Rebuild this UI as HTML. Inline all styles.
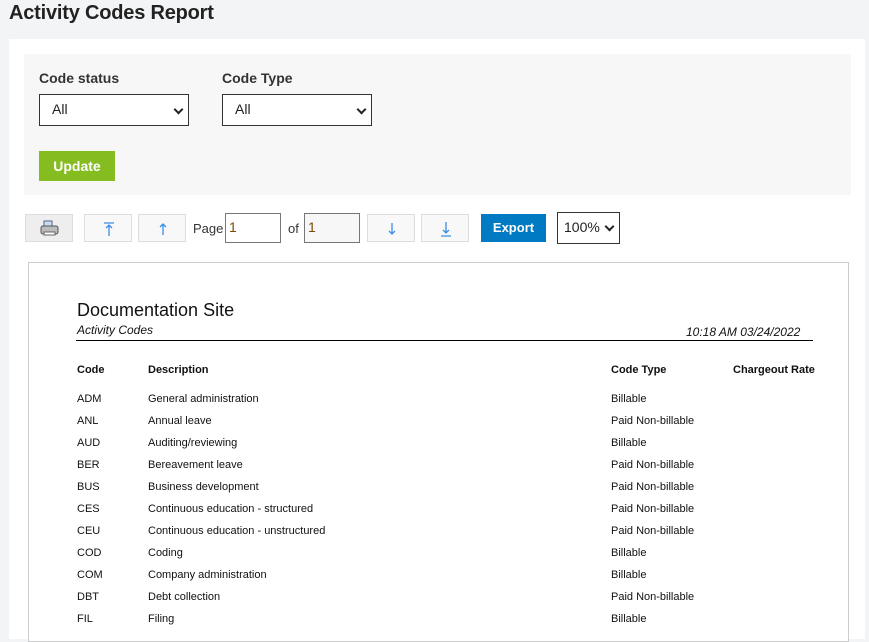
<!DOCTYPE html>
<html><head><meta charset="utf-8"><style>
*{box-sizing:border-box;margin:0;padding:0}
body{width:869px;height:622px;overflow:hidden;background:#f3f4f6;font-family:"Liberation Sans",Arial,sans-serif;position:relative;color:#222}
.abs{position:absolute}
h1{position:absolute;left:9px;top:2px;font-size:20px;font-weight:bold;color:#222;letter-spacing:-0.2px}
.panel{left:9px;top:39px;width:856px;height:600px;background:#fff}
.filt{left:24px;top:54px;width:827px;height:141px;background:#f7f7f8}
.lbl{font-size:14px;font-weight:bold;color:#333}
.sel{border:1px solid #333;background:#fff;height:32px;font-size:14px;padding:6px 12px;color:#222}
.chev{position:absolute;right:6px;top:11px;width:7px;height:7px;border-right:2px solid #222;border-bottom:2px solid #222;transform:rotate(45deg)}
.btn{border:1px solid #ddd;background:#f8f8f8;height:28px}
.inp{border:1px solid #777;height:30px;background:#fff;font-size:14px;padding:5px 3px;color:#7a4a00}
.rep{left:28px;top:262px;width:821px;height:380px;background:#fff;border:1px solid #ccc}
.t{position:absolute;font-size:11px;color:#111}
.b{font-weight:bold}
</style></head><body>
<h1>Activity Codes Report</h1>
<div class="abs panel"></div>
<div class="abs filt"></div>
<div class="abs lbl" style="left:39px;top:70px">Code status</div>
<div class="abs lbl" style="left:222px;top:70px">Code Type</div>
<div class="abs sel" style="left:39px;top:94px;width:150px">All<span class="chev"></span></div>
<div class="abs sel" style="left:222px;top:94px;width:150px">All<span class="chev"></span></div>
<div class="abs" style="left:39px;top:151px;width:76px;height:30px;background:#85bc20;color:#fff;font-size:14px;font-weight:bold;text-align:center;line-height:30px">Update</div>

<div class="abs btn" style="left:25px;top:214px;width:48px;background:#eee">
<svg width="48" height="28"><rect x="18" y="6" width="8" height="6" fill="#cde" stroke="#568"/><rect x="15" y="11" width="17" height="8" rx="2" fill="#bbb" stroke="#555"/><rect x="18" y="17" width="11" height="3" fill="#fff" stroke="#666"/></svg></div>
<div class="abs btn" style="left:84px;top:214px;width:48px"><svg width="48" height="28"><path d="M19 8h10M24 10v11M21 13l3-3 3 3" stroke="#3a8ee6" fill="none" stroke-width="1.3"/></svg></div>
<div class="abs btn" style="left:138px;top:214px;width:48px"><svg width="48" height="28"><path d="M24 9v11M21 12l3-3 3 3" stroke="#3a8ee6" fill="none" stroke-width="1.3"/></svg></div>
<div class="abs" style="left:193px;top:221px;font-size:13px;color:#333">Page</div>
<div class="abs inp" style="left:225px;top:213px;width:56px">1</div>
<div class="abs" style="left:288px;top:221px;font-size:13px;color:#333">of</div>
<div class="abs inp" style="left:304px;top:213px;width:56px;background:#f7f7f7">1</div>
<div class="abs btn" style="left:367px;top:214px;width:48px"><svg width="48" height="28"><path d="M24 8v11M21 16l3 3 3-3" stroke="#3a8ee6" fill="none" stroke-width="1.3"/></svg></div>
<div class="abs btn" style="left:421px;top:214px;width:48px"><svg width="48" height="28"><path d="M24 7v11M21 15l3 3 3-3M19 21h10" stroke="#3a8ee6" fill="none" stroke-width="1.3"/></svg></div>
<div class="abs" style="left:481px;top:214px;width:65px;height:28px;background:#007ac3;color:#fff;font-size:13px;font-weight:bold;text-align:center;line-height:28px">Export</div>
<div class="abs sel" style="left:557px;top:212px;width:63px;height:32px;padding:6px 6px;font-size:14px">100%<span class="chev" style="right:6px;top:10px"></span></div>

<div class="abs rep"></div>
<div class="t" style="left:77px;top:300px;font-size:18px">Documentation Site</div>
<div class="t" style="left:77px;top:323px;font-size:12px;font-style:italic">Activity Codes</div>
<div class="t" style="left:686px;top:325px;font-size:12px;font-style:italic">10:18 AM 03/24/2022</div>
<div class="abs" style="left:76px;top:340px;width:737px;height:1px;background:#000"></div>
<div class="t b" style="left:77px;top:364px">Code</div>
<div class="t b" style="left:148px;top:364px">Description</div>
<div class="t b" style="left:611px;top:364px">Code Type</div>
<div class="t b" style="left:733px;top:364px">Chargeout Rate</div>
<div class="t" style="left:77px;top:388px;line-height:22px">ADM<br>ANL<br>AUD<br>BER<br>BUS<br>CES<br>CEU<br>COD<br>COM<br>DBT<br>FIL</div>
<div class="t" style="left:148px;top:388px;line-height:22px">General administration<br>Annual leave<br>Auditing/reviewing<br>Bereavement leave<br>Business development<br>Continuous education - structured<br>Continuous education - unstructured<br>Coding<br>Company administration<br>Debt collection<br>Filing</div>
<div class="t" style="left:611px;top:388px;line-height:22px">Billable<br>Paid Non-billable<br>Billable<br>Paid Non-billable<br>Paid Non-billable<br>Paid Non-billable<br>Paid Non-billable<br>Billable<br>Billable<br>Paid Non-billable<br>Billable</div>
</body></html>
